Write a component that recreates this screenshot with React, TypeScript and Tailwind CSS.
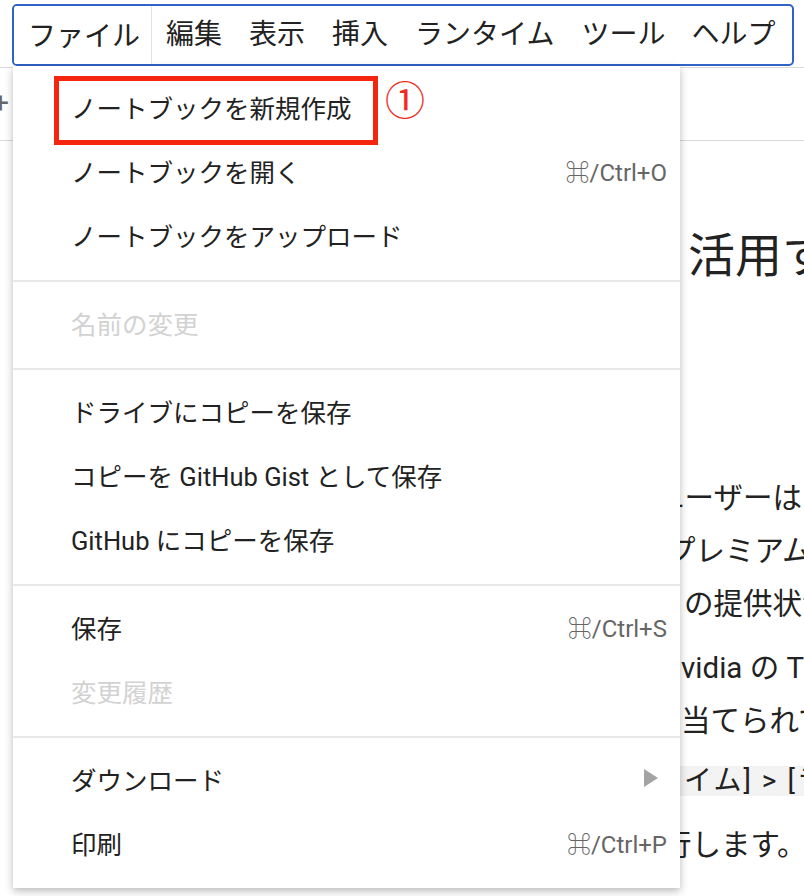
const MENU_SECTIONS: { label: string; shortcut?: string; disabled?: boolean; submenu?: boolean }[][] = [
  [
    { label: 'ノートブックを新規作成' },
    { label: 'ノートブックを開く', shortcut: '⌘/Ctrl+O' },
    { label: 'ノートブックをアップロード' },
  ],
  [{ label: '名前の変更', disabled: true }],
  [
    { label: 'ドライブにコピーを保存' },
    { label: 'コピーを GitHub Gist として保存' },
    { label: 'GitHub にコピーを保存' },
  ],
  [
    { label: '保存', shortcut: '⌘/Ctrl+S' },
    { label: '変更履歴', disabled: true },
  ],
  [
    { label: 'ダウンロード', submenu: true },
    { label: '印刷', shortcut: '⌘/Ctrl+P' },
  ],
]

const MENUBAR = ['編集', '表示', '挿入', 'ランタイム', 'ツール', 'ヘルプ']

function FileMenu() {
  return (
    <div className="absolute left-[13px] top-[66px] w-[667px] bg-white shadow-[0_3px_8px_rgba(0,0,0,0.28)] z-10">
      {MENU_SECTIONS.map((section, i) => (
        <div key={i} className={`py-[11px] ${i > 0 ? 'border-t-2 border-[#e8e8e8]' : ''}`}>
          {section.map((item) => (
            <div key={item.label} className="h-16 flex items-center pl-[58px] pr-[13px]">
              <span
                className={`flex-1 text-[25.5px] whitespace-nowrap ${
                  item.disabled ? 'text-[#d2d2d2]' : 'text-[#222]'
                }`}
              >
                {item.label}
              </span>
              {item.shortcut && <span className="text-[24px] text-[#666]">{item.shortcut}</span>}
              {item.submenu && (
                <svg width="14" height="18" viewBox="0 0 14 18" className="mr-[9px] -mt-[6px]">
                  <path d="M0 0 L14 9 L0 18 Z" fill="#a3a3a3" />
                </svg>
              )}
            </div>
          ))}
        </div>
      ))}
      {/* annotation */}
      <div className="absolute left-[41px] top-[10px] w-[324px] h-[69px] border-[5px] border-[#f5260f]" />
      <div className="absolute left-[372px] top-[12px] text-[40px] leading-[48px] text-[#ee2b1e]">①</div>
    </div>
  )
}

export default function App() {
  return (
    <div className="relative w-[804px] h-[896px] overflow-hidden bg-white font-[Roboto,'Noto_Sans_CJK_JP',sans-serif]">
      {/* header with menubar */}
      <div className="h-[68px] border-b border-[#dadada] pl-3 pt-1">
        <div className="flex items-stretch w-[782px] h-[62px] border-2 border-[#2f63c6] rounded-[5px] whitespace-nowrap overflow-hidden">
          <div className="shrink-0 pl-[14px] pr-[11px] -ml-[1px] -mt-[1px] h-[62px] flex items-center bg-white border border-b-0 border-[#e2e2e2] text-[28px] text-[#222] relative z-20">
            ファイル
          </div>
          {MENUBAR.map((m, i) => (
            <div
              key={m}
              className={`shrink-0 flex items-center text-[28px] text-[#222] ${
                i === MENUBAR.length - 1 ? 'pl-[13px] pr-[4px]' : 'pl-[14px] pr-[13px]'
              }`}
            >
              {m}
            </div>
          ))}
        </div>
      </div>

      {/* toolbar */}
      <div className="h-[73px] border-b border-[#dadada] flex items-center">
        <span className="-ml-[8px] text-[30px] text-[#666] -mt-[4px]">+</span>
      </div>

      {/* notebook content, mostly hidden behind the menu */}
      <div className="text-[#222] whitespace-nowrap">
        <div className="mt-[85px] h-[60px] leading-[60px] text-[47px] ml-[688px]">活用する</div>
        <div className="mt-[186px] h-[53px] leading-[53px] text-[29.5px] ml-[655px]">ユーザーは</div>
        <div className="h-[53px] leading-[53px] text-[29.5px] ml-[666px]">プレミアム</div>
        <div className="h-[53px] leading-[53px] text-[29.5px] ml-[684px]">の提供状況</div>
        <div className="mt-[11px] h-[53px] leading-[53px] text-[29.5px] ml-[660px]">Nvidia の T4</div>
        <div className="h-[53px] leading-[53px] text-[29.5px] ml-[622px]">割り当てられて</div>
        <div className="mt-[6px] h-[53px] flex items-center">
          <span className="ml-[650px] bg-[#f3f3f3] px-1 h-[30px] leading-[30px] text-[28px] tracking-[2px]">タイム] &gt; [ランタイム</span>
        </div>
        <div className="mt-[12px] h-[53px] leading-[53px] text-[29.5px] ml-[662px]">行します。</div>
      </div>

      <FileMenu />
    </div>
  )
}
